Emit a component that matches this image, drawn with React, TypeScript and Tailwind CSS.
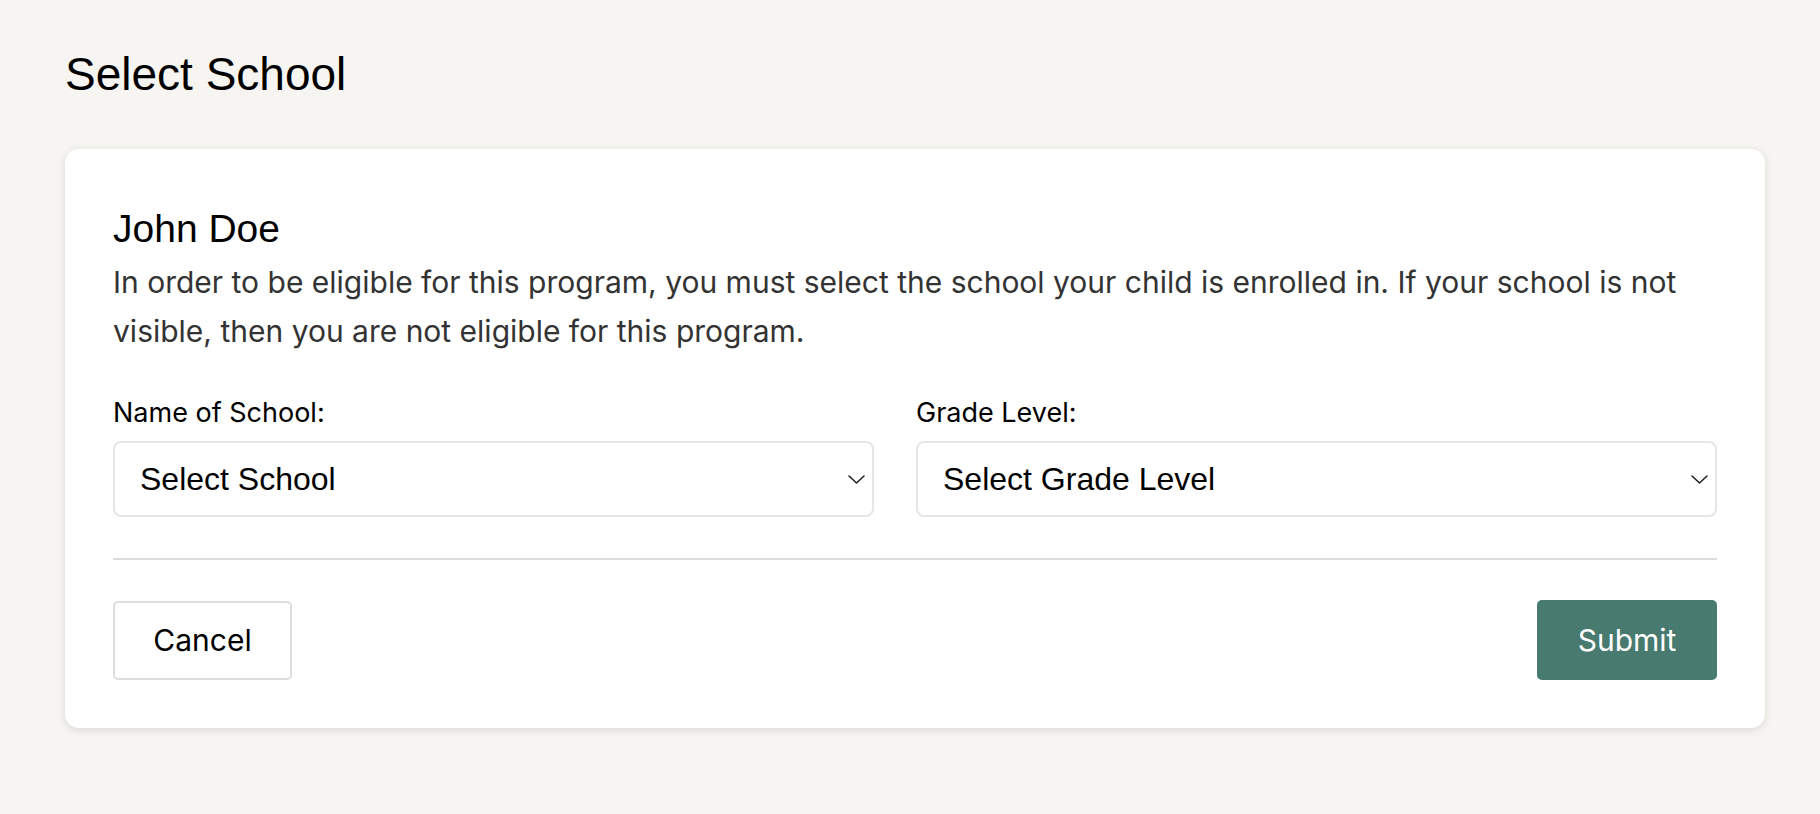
import React from "react";

function Chevron() {
  return (
    <svg width="17" height="9" viewBox="0 0 17 9" fill="none" className="shrink-0">
      <path d="M1 1l7.5 7 7.5-7" stroke="#222" strokeWidth="1.6" strokeLinecap="round" strokeLinejoin="round" />
    </svg>
  );
}

function SelectBox({ text }: { text: string }) {
  return (
    <div className="flex h-[76px] items-center justify-between rounded-[8px] border-2 border-[#e6e6ea] bg-white pl-[25px] pr-[7px]">
      <span className="text-[32px] text-black" style={{ fontFamily: '"Liberation Sans", Arial, sans-serif' }}>
        {text}
      </span>
      <Chevron />
    </div>
  );
}

export default function App() {
  return (
    <div className="min-h-[814px] w-full bg-[#f6f5f2] pt-[46px]" style={{ fontFamily: 'Inter, "Noto Sans", sans-serif' }}>
      <h1
        className="ml-[65px] text-[46px] leading-[56px] text-black"
        style={{ fontFamily: '"Liberation Sans", Arial, sans-serif' }}
      >
        Select School
      </h1>
      <div className="ml-[65px] mt-[47px] w-[1700px] rounded-[14px] bg-white p-[48px] shadow-[0_2px_8px_rgba(0,0,0,0.12)]">
        <h2
          className="mt-[12px] text-[39px] leading-[40px] text-black"
          style={{ fontFamily: '"Liberation Sans", Arial, sans-serif' }}
        >
          John Doe
        </h2>
        <p className="mt-[9px] text-[30px] leading-[49px] text-[#333]">
          In order to be eligible for this program, you must select the school your child is enrolled in. If your school is not visible, then you are not eligible for this program.
        </p>
        <div className="mt-[40px] grid grid-cols-[761px_1fr] gap-x-[42px]">
          <div>
            <div className="mb-[11px] text-[27px] leading-[34px] text-black">Name of School:</div>
            <SelectBox text="Select School" />
          </div>
          <div>
            <div className="mb-[11px] text-[27px] leading-[34px] text-black">Grade Level:</div>
            <SelectBox text="Select Grade Level" />
          </div>
        </div>
        <div className="mt-[41px] h-[2px] bg-[#dcdcdc]" />
        <div className="mt-[40px] flex items-center justify-between">
          <button className="h-[79px] w-[179px] rounded-[5px] border-2 border-[#dedede] bg-white text-[30px] text-black">
            Cancel
          </button>
          <button className="h-[80px] w-[180px] rounded-[5px] bg-[#487a70] text-[30px] text-white">
            Submit
          </button>
        </div>
      </div>
    </div>
  );
}
